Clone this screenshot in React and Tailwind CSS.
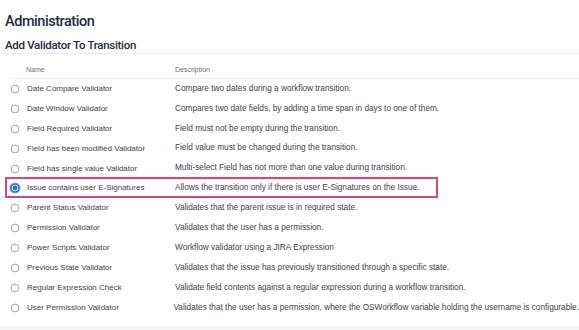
import React from "react";

const rows = [
  ["Date Compare Validator", "Compare two dates during a workflow transition."],
  ["Date Window Validator", "Compares two date fields, by adding a time span in days to one of them."],
  ["Field Required Validator", "Field must not be empty during the transition."],
  ["Field has been modified Validator", "Field value must be changed during the transition."],
  ["Field has single value Validator", "Multi-select Field has not more than one value during transition."],
  ["Issue contains user E-Signatures", "Allows the transition only if there is user E-Signatures on the Issue.", true],
  ["Parent Status Validator", "Validates that the parent issue is in required state."],
  ["Permission Validator", "Validates that the user has a permission."],
  ["Power Scripts Validator", "Workflow validator using a JIRA Expression"],
  ["Previous State Validator", "Validates that the issue has previously transitioned through a specific state."],
  ["Regular Expression Check", "Validate field contents against a regular expression during a workflow transition."],
  ["User Permission Validator", "Validates that the user has a permission, where the OSWorkflow variable holding the username is configurable."],
];

function Radio({ checked }) {
  if (checked) {
    return (
      <svg width="12" height="12" viewBox="0 0 12 12" className="shrink-0">
        <circle cx="6" cy="6" r="5.6" fill="#7fa8f0" />
        <circle cx="6" cy="6" r="4.6" fill="#1f6fe5" />
        <circle cx="6" cy="6" r="3.2" fill="#ffffff" />
        <circle cx="6" cy="6" r="2.4" fill="#1f6fe5" />
      </svg>
    );
  }
  return (
    <svg width="12" height="12" viewBox="0 0 12 12" className="shrink-0">
      <circle cx="6" cy="6" r="3.9" fill="#fff" stroke="#8a8a8a" strokeWidth="0.8" />
    </svg>
  );
}

export default function App() {
  return (
    <div
      className="w-[579px] h-[330px] bg-white overflow-hidden flex flex-col"
      style={{ fontFamily: '"Liberation Sans", Arial, sans-serif' }}
    >
      <div
        className="pl-[5px] pt-[13px] h-[33px] text-[14.5px] leading-[18px] font-medium tracking-[-0.45px] text-[#1d2b4a]"
        style={{ fontFamily: 'Roboto, "Liberation Sans", sans-serif' }}
      >
        Administration
      </div>
      <div
        className="ml-[5px] h-[21px] border-b border-[#ebecf0] text-[11.5px] leading-[25px] font-medium tracking-[-0.3px] text-[#1d2b4a]"
        style={{ fontFamily: 'Roboto, "Liberation Sans", sans-serif' }}
      >
        Add Validator To Transition
      </div>
      <div className="ml-[9px] mt-[9px] h-[16px] border-b border-[#eeeff2] flex items-center text-[7px] text-[#6b6f78]">
        <div className="w-[166px] pl-[17px]">Name</div>
        <div>Description</div>
      </div>
      <div className="flex flex-col">
        {rows.map(([name, desc, checked], i) => (
          <div key={i} className="relative h-[19.9px] flex items-center text-[8px] text-[#3f4247] whitespace-nowrap">
            {checked && (
              <div className="absolute left-[5px] top-[-1px] w-[433px] h-[21px] border-2 border-[#d7467c]" />
            )}
            <div className="w-[175px] flex items-center pl-[9px] gap-[6px]">
              <Radio checked={checked} />
              <span>{name}</span>
            </div>
            <span className="text-[8.25px]">{desc}</span>
          </div>
        ))}
      </div>
      <div className="mt-auto h-[4px] bg-[#f4f5f7]" />
    </div>
  );
}
